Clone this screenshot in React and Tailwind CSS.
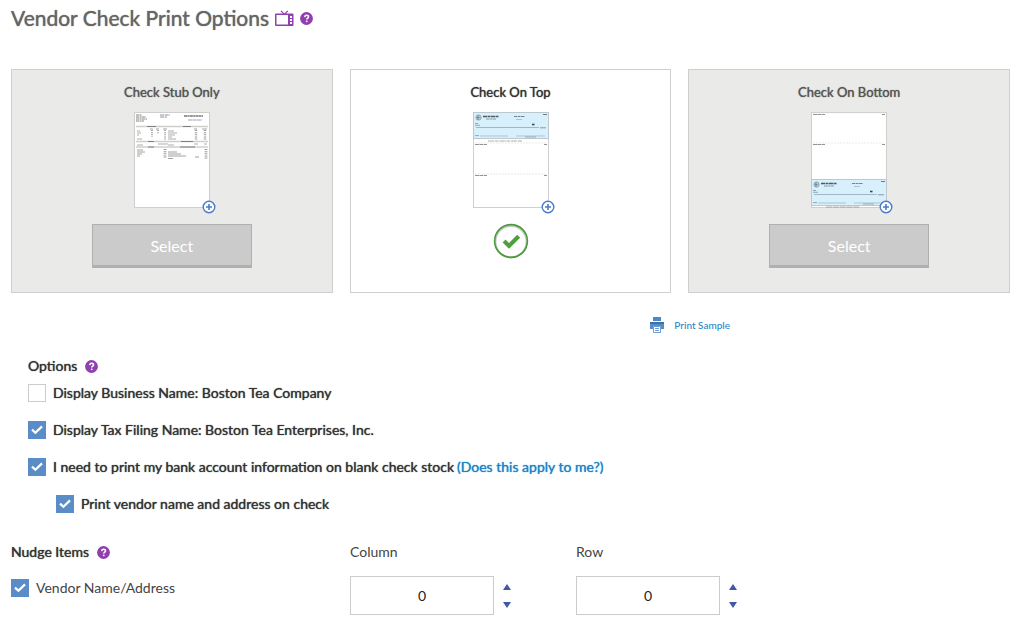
import { useState } from "react";

function HelpIcon({ label }) {
  return (
    <button type="button" aria-label={label} className="block size-[13px] shrink-0">
      <svg viewBox="0 0 13 13" className="block size-[13px]" aria-hidden="true">
        <circle cx="6.5" cy="6.5" r="6.4" fill="#8f3fae" />
        <path d="M4.7 5.1C4.8 3.9 5.6 3.3 6.6 3.3C7.7 3.3 8.5 3.9 8.5 4.9C8.5 6.1 6.7 6.2 6.7 7.6" fill="none" stroke="#fff" strokeWidth="1.5" />
        <rect x="5.9" y="8.6" width="1.6" height="1.5" fill="#fff" />
      </svg>
    </button>
  );
}

function TvIcon() {
  return (
    <svg viewBox="0 0 19 17" className="block h-[17px] w-[19px]" aria-hidden="true">
      <path d="M6 0.8L9.2 4.2M12.8 0.8L9.8 4.2" fill="none" stroke="#8f3fae" strokeWidth="1.2" />
      <path fillRule="evenodd" fill="#8f3fae" d="M1 3.5H17.5Q18.5 3.5 18.5 4.5V15Q18.5 16 17.5 16H1Q0 16 0 15V4.5Q0 3.5 1 3.5ZM1.5 5V14.5H13V5ZM15 6V8H17V6ZM15 9V11H17V9ZM15 12V14H17V12Z" />
    </svg>
  );
}

function CheckFace({ y }) {
  return (
    <g transform={`translate(0 ${y})`}>
      <rect x="0.5" y="0.5" width="75" height="26" fill="#d8effc" stroke="#bcc8ce" />
      <circle cx="5.5" cy="5.5" r="2.6" fill="#b4cdd6" stroke="#8199a4" strokeWidth="0.8" />
      <path d="M4 5.5H6.5M5 3.5V7.5" stroke="#4d6874" strokeWidth="0.6" />
      <path d="M10 4.5H26" stroke="#4d5a62" strokeWidth="1.3" strokeDasharray="4 0.5 3 0.5" />
      <path d="M13 7H23" stroke="#7b8c96" strokeWidth="0.9" strokeDasharray="3 0.5" />
      <path d="M41 4.5H52" stroke="#73858e" strokeWidth="1.1" strokeDasharray="3 0.5" />
      <path d="M43 7.5H49" stroke="#9fb4bd" strokeWidth="0.8" />
      <path d="M70 2.5H74" stroke="#6b7b83" strokeWidth="1" />
      <path d="M2 11.5H5M2 13.3H7" stroke="#7d95a2" strokeWidth="0.8" />
      <path d="M59 12.5H61.5" stroke="#3a474e" strokeWidth="1.6" />
      <path d="M3 15.5H66" stroke="#92a9b4" strokeWidth="0.8" />
      <path d="M67 15.8H73" stroke="#71858f" strokeWidth="0.8" />
      <path d="M2 23.6H6" stroke="#8095a0" strokeWidth="0.8" />
      <path d="M7 24H35M43 24H72" stroke="#9db4bf" strokeWidth="0.7" />
      <path d="M52 25H63" stroke="#7e949f" strokeWidth="0.7" />
    </g>
  );
}

function StubHeader({ y }) {
  return (
    <g transform={`translate(0 ${y})`}>
      <path d="M2 0H74" stroke="#dcdcdc" strokeWidth="0.6" strokeDasharray="2 1" />
      <path d="M2 1.5H14M71 1.5H74" stroke="#888" strokeWidth="0.9" strokeDasharray="4 0.4" />
    </g>
  );
}

function StubOnlySheet() {
  return (
    <>
      <path d="M2 3H8M2 5H12M2 7H13M2 9H10" stroke="#777" strokeWidth="0.9" strokeDasharray="3 0.5 2 0.4" />
      <path d="M26 3H36M26 5H33" stroke="#888" strokeWidth="0.9" strokeDasharray="4 0.6" />
      <path d="M50 4H69" stroke="#777" strokeWidth="1.3" strokeDasharray="3 0.4 2 0.4" />
      <path d="M54 8H68" stroke="#a0a4b2" strokeWidth="1.1" strokeDasharray="4 0.4" />
      <path d="M2 14.5H74M2 29.5H74M2 35H74" stroke="#cfcfca" strokeWidth="1.7" />
      <path d="M13 14.5H22M49 14.5H57M14 29.5H20M47 29.5H59M14 35H20M46 35H61" stroke="#777" strokeWidth="0.9" />
      <path d="M16 17H19M22 17H25M29 17H33M60 17H63M68 17H73" stroke="#999" strokeWidth="0.9" />
      <path d="M3 19H6M3 21H7M3 23H5M3 27H8" stroke="#999" strokeWidth="0.8" />
      <path d="M18 18V25M24 18V22M31 18V28" stroke="#aaa" strokeWidth="2" strokeDasharray="0.9 1" />
      <path d="M34 19H40M34 21H43M34 23H41M34 25H38M34 27H42" stroke="#999" strokeWidth="0.8" />
      <path d="M62 18V28M71 18V28" stroke="#999" strokeWidth="2.4" strokeDasharray="0.9 1" />
      <path d="M24 32H34M3 33H9M34 33H40M60 32H64M70 32H73" stroke="#999" strokeWidth="0.8" />
      <path d="M3 38H9M3 40H11M3 42H8M3 44H6M34 40H43M34 42H47M34 44H52M34 46.5H39M61 45H65" stroke="#888" strokeWidth="0.8" />
      <path d="M31 37V46M72 37V47" stroke="#999" strokeWidth="2.8" strokeDasharray="0.9 1" />
    </>
  );
}

function Sheet({ kind }) {
  return (
    <svg viewBox="0 0 76 96" className="block h-24 w-[76px]" aria-hidden="true">
      <rect x="0.5" y="0.5" width="75" height="95" fill="#fff" stroke="#cfcfcf" />
      {kind === "stub" && <StubOnlySheet />}
      {kind === "top" && (
        <>
          <CheckFace y={0} />
          <path d="M15 29H49" stroke="#999" strokeWidth="0.8" strokeDasharray="6 0.8 4 0.8" />
          <StubHeader y={31} />
          <StubHeader y={62} />
        </>
      )}
      {kind === "bottom" && (
        <>
          <StubHeader y={1} />
          <StubHeader y={31} />
          <CheckFace y={67} />
          <path d="M15 95H49" stroke="#999" strokeWidth="0.8" strokeDasharray="6 0.8" />
        </>
      )}
    </svg>
  );
}

function OptionCard({ title, kind, selected, onSelect }) {
  const tone = selected ? "bg-white text-[#333]" : "bg-[#eaeae8] text-[#555]";
  return (
    <section className={`flex h-56 flex-1 flex-col items-center border border-[#cfcfcf] pt-3 ${tone}`}>
      <h2 className="text-[13px] leading-5 font-normal [text-shadow:0_0_1px_currentColor]">{title}</h2>
      <div className="relative mt-[10px]">
        <Sheet kind={kind} />
        <button type="button" aria-label={`Enlarge ${title}`} className="absolute -right-[6px] -bottom-[6px]">
          <svg viewBox="0 0 14 14" className="block size-[14px]" aria-hidden="true">
            <circle cx="7" cy="7" r="5.8" fill="#fff" stroke="#4a7bcb" strokeWidth="1.4" />
            <path d="M7 4V10M4 7H10" stroke="#4a7bcb" strokeWidth="1.6" />
          </svg>
        </button>
      </div>
      {selected ? (
        <svg viewBox="0 0 36 36" className="mt-[15px] block size-9" role="img" aria-label="Selected">
          <circle cx="18" cy="18.6" r="15.6" fill="none" stroke="#c8c8c8" strokeWidth="2" />
          <circle cx="18" cy="18" r="16.4" fill="none" stroke="#4a9a3a" strokeWidth="1.6" />
          <path d="M9.6 19.5L12.5 16.5L16 19.9L24.2 11.8L27.2 14.8L16 25.8Z" fill="#4f9f3c" />
        </svg>
      ) : (
        <button
          type="button"
          onClick={onSelect}
          className="mt-4 h-11 w-1/2 border border-b-[3px] border-[#b0b0b0] bg-[#cbcbcb] pt-[2px] text-[16px] text-white"
        >
          Select
        </button>
      )}
    </section>
  );
}

function CheckRow({ id, checked, onChange, className = "", children, link }) {
  return (
    <div className={`flex items-center gap-[7px] ${className}`}>
      <span className="relative block size-[18px] shrink-0">
        <input
          id={id}
          type="checkbox"
          checked={checked}
          onChange={onChange}
          className="block size-[18px] appearance-none border border-[#ccc] bg-white checked:border-[#5a8dc8] checked:bg-[#5a8dc8]"
        />
        {checked && (
          <svg viewBox="0 0 18 18" className="pointer-events-none absolute inset-0 size-[18px]" aria-hidden="true">
            <path d="M4 8.6L7.4 11.8L14 5.4" fill="none" stroke="#fff" strokeWidth="2.2" />
          </svg>
        )}
      </span>
      <label htmlFor={id}>{children}</label>
      {link}
    </div>
  );
}

function Stepper({ id, label }) {
  const [value, setValue] = useState(0);
  const arrow = "flex h-[18px] w-3 items-center justify-center";
  return (
    <div className="w-[226px]">
      <label htmlFor={id} className="block text-[14px] leading-5">{label}</label>
      <div className="mt-[14px] flex items-center gap-[7px]">
        <input
          id={id}
          type="text"
          inputMode="numeric"
          value={value}
          onChange={(e) => setValue(Number(e.target.value) || 0)}
          className="h-[39px] w-36 border border-[#ccc] bg-white text-center text-[14px] text-[#222]"
        />
        <div className="flex flex-col">
          <button type="button" aria-label={`Increase ${label}`} className={arrow} onClick={() => setValue(value + 1)}>
            <svg viewBox="0 0 8 6" className="h-[6px] w-2" aria-hidden="true"><path d="M4 0L8 6H0Z" fill="#4058a5" /></svg>
          </button>
          <button type="button" aria-label={`Decrease ${label}`} className={arrow} onClick={() => setValue(value - 1)}>
            <svg viewBox="0 0 8 6" className="h-[6px] w-2" aria-hidden="true"><path d="M0 0H8L4 6Z" fill="#4058a5" /></svg>
          </button>
        </div>
      </div>
    </div>
  );
}

export default function App() {
  const [layout, setLayout] = useState("top");
  const [opts, setOpts] = useState({ business: false, tax: true, bank: true, vendor: true, nudge: true });
  const bind = (key) => ({
    id: key,
    checked: opts[key],
    onChange: (e) => setOpts({ ...opts, [key]: e.target.checked }),
  });
  const cards = [
    ["stub", "Check Stub Only"],
    ["top", "Check On Top"],
    ["bottom", "Check On Bottom"],
  ];

  return (
    <main className="bg-white pt-1 pr-[14px] pb-7 pl-[11px] font-['Lato',sans-serif] text-[14px] leading-5 text-[#333]">
      <header className="flex items-center gap-[6px]">
        <h1 className="text-[21px] leading-7 font-normal text-[#666] [text-shadow:0_0_1px_currentColor]">Vendor Check Print Options</h1>
        <button type="button" aria-label="Watch video"><TvIcon /></button>
        <HelpIcon label="Help with print options" />
      </header>

      <div className="mt-[37px] flex gap-[17px]">
        {cards.map(([kind, title]) => (
          <OptionCard key={kind} kind={kind} title={title} selected={layout === kind} onSelect={() => setLayout(kind)} />
        ))}
      </div>

      <div className="mt-[22px] flex pl-[64%]">
        <a href="#sample" className="flex items-center gap-[10px] text-[10px] leading-5 font-medium text-[#2a86c8]">
          <svg viewBox="0 0 14 16" className="block h-4 w-[14px]" aria-hidden="true">
            <path d="M3 0H11V4H3Z" fill="#4f86c4" />
            <path d="M0 5H14V12H11V9H3V12H0Z" fill="#5a8dc8" />
            <path d="M0 5H14V7H0Z" fill="#3c6fb0" />
            <path d="M3.5 9.5H10.5V15.5H3.5Z" fill="#fff" stroke="#6f9bd0" />
            <path d="M5 11.5H9M5 13.5H9" stroke="#6f9bd0" />
          </svg>
          Print Sample
        </a>
      </div>

      <fieldset className="mt-[21px] pl-[17px] font-normal [text-shadow:0_0_1px_currentColor]" aria-labelledby="options-title">
        <div className="flex items-center gap-2">
          <h2 id="options-title">Options</h2>
          <HelpIcon label="Help with options" />
        </div>
        <div className="mt-[7px] flex flex-col gap-[17px]">
          <CheckRow {...bind("business")}>Display Business Name: Boston Tea Company</CheckRow>
          <CheckRow {...bind("tax")}>Display Tax Filing Name: Boston Tea Enterprises, Inc.</CheckRow>
          <CheckRow
            {...bind("bank")}
            link={<a href="#apply" className="-ml-1 text-[#1c84c6] [text-shadow:0_0_1px_currentColor]">(Does this apply to me?)</a>}
          >
            I need to print my bank account information on blank check stock
          </CheckRow>
          <CheckRow {...bind("vendor")} className="pl-7">Print vendor name and address on check</CheckRow>
        </div>
      </fieldset>

      <div className="mt-7 flex text-[#444]">
        <div className="w-[339px]">
          <div className="flex items-center gap-2">
            <h2 className="font-normal text-[#333] [text-shadow:0_0_1px_currentColor]">Nudge Items</h2>
            <HelpIcon label="Help with nudging items" />
          </div>
          <CheckRow {...bind("nudge")} className="mt-4">Vendor Name/Address</CheckRow>
        </div>
        <Stepper id="nudge-column" label="Column" />
        <Stepper id="nudge-row" label="Row" />
      </div>
    </main>
  );
}
